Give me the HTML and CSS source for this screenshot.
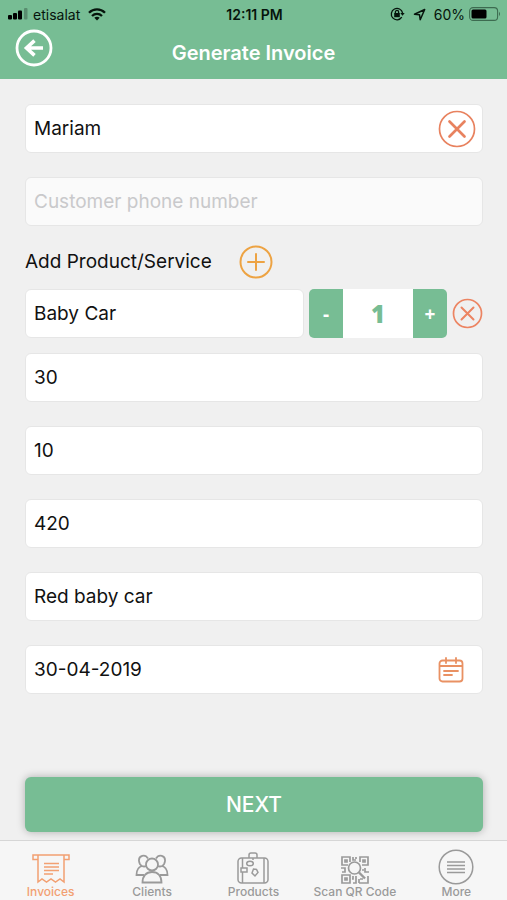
FILE: index.html
```html
<!DOCTYPE html>
<html lang="en">
<head>
<meta charset="utf-8">
<meta name="viewport" content="width=device-width, initial-scale=1">
<title>Generate Invoice</title>
<link rel="stylesheet" href="styles.css">
</head>
<body>
<header class="header">
  <div class="status">
    <div class="status-left">
      <svg width="20" height="12" viewBox="0 0 20 12"><rect x="0" y="7" width="4" height="4.500" rx="1"/><rect x="5" y="5" width="4" height="6.500" rx="1"/><rect x="10" y="2.500" width="4" height="9" rx="1"/><rect x="16" y="0" width="3.500" height="11.500" rx="1" opacity=".25"/></svg>
      <span>etisalat</span>
      <svg class="wifi" width="18" height="13" viewBox="0 0 18 13" fill="none" stroke="#06140c" stroke-width="2.300"><path d="M1 4.800C5.500 .3 12.500 .3 17 4.800M4 8c2.900-2.800 7.100-2.800 10 0"/><path d="M9 12.500 6.300 9.800q2.700-2 5.400 0Z" fill="#06140c" stroke="none"/></svg>
    </div>
    <strong class="time">12:11 PM</strong>
    <div class="status-right">
      <svg width="15" height="14" viewBox="0 0 15 14" fill="none" stroke="#06140c" stroke-width="1.300"><path d="M11.800 10.200A5.700 5.700 0 1 1 12.600 6"/><path d="M10.300 6h4.400l-2.200 2.800Z" fill="#06140c" stroke="none"/><rect x="4.200" y="6" width="5.600" height="4.200" fill="#06140c" stroke="none"/><path d="M5.400 6.500V5a1.600 1.600 0 0 1 3.200 0v1.500"/></svg>
      <svg width="13" height="13" viewBox="0 0 13 13" fill="none" stroke="#06140c" stroke-width="1.500" stroke-linejoin="round"><path d="M1.500 6.300 11.700 1.500 7.200 11.700 6.500 6.700Z"/></svg>
      <span>60%</span>
      <svg class="battery" width="32" height="14" viewBox="0 0 32 14"><rect x=".6" y=".6" width="28" height="12.800" rx="3.500" fill="none" stroke="#3d6b50" stroke-width="1.100"/><rect x="2.500" y="2.500" width="15" height="9" rx="1.500" fill="#000"/><path d="M30 4.800q2 2.200 0 4.400Z" fill="#3d6b50"/></svg>
    </div>
  </div>
  <div class="titlebar">
    <button class="icon-btn" type="button" aria-label="Back">
      <svg width="38" height="38" viewBox="0 0 38 38" fill="none" stroke="#fff"><circle cx="19" cy="19" r="17" stroke-width="2.800"/><path d="M28 19H12M19.500 11.700 11.500 19l8 7.300" stroke-width="3.600"/></svg>
    </button>
    <h1 class="title">Generate Invoice</h1>
  </div>
</header>

<main class="form">
  <div class="stack">
    <div class="field">
      <input class="input" type="text" value="Mariam" aria-label="Customer name">
      <button class="icon-btn" type="button" aria-label="Clear customer">
        <svg width="38" height="38" viewBox="0 0 38 38" fill="none" stroke="#e8825f"><circle cx="19" cy="19" r="17.500" stroke-width="1.700"/><path d="m11.500 11.500 15 15M26.500 11.500l-15 15" stroke-width="2.700" stroke-linecap="round"/></svg>
      </button>
    </div>
    <div class="field field-empty">
      <input class="input" type="tel" placeholder="Customer phone number" aria-label="Customer phone number">
    </div>
  </div>

  <div class="add-row">
    <span>Add Product/Service</span>
    <button class="icon-btn" type="button" aria-label="Add product or service">
      <svg width="34" height="34" viewBox="0 0 34 34" fill="none" stroke="#eda343"><circle cx="17" cy="17" r="15.500" stroke-width="2"/><path d="M17 9v16M9 17h16" stroke-width="2" stroke-linecap="round"/></svg>
    </button>
  </div>

  <div class="product-row">
    <div class="field product">
      <input class="input" type="text" value="Baby Car" aria-label="Product">
    </div>
    <div class="stepper">
      <button class="step" type="button" aria-label="Decrease">-</button>
      <input class="qty" type="text" inputmode="numeric" value="1" aria-label="Quantity">
      <button class="step" type="button" aria-label="Increase">+</button>
    </div>
    <button class="icon-btn" type="button" aria-label="Remove product">
      <svg width="31" height="31" viewBox="0 0 31 31" fill="none" stroke="#ec8462"><circle cx="15.500" cy="15.500" r="14" stroke-width="1.700"/><path d="m9.500 9.500 12 12M21.500 9.500l-12 12" stroke-width="2" stroke-linecap="round"/></svg>
    </button>
  </div>

  <div class="stack">
    <div class="field"><input class="input" type="text" value="30" aria-label="Price"></div>
    <div class="field"><input class="input" type="text" value="10" aria-label="Discount"></div>
    <div class="field"><input class="input" type="text" value="420" aria-label="Total"></div>
    <div class="field"><input class="input" type="text" value="Red baby car" aria-label="Description"></div>
    <div class="field">
      <input class="input" type="text" value="30-04-2019" aria-label="Date">
      <button class="icon-btn calendar" type="button" aria-label="Pick a date">
        <svg width="26" height="26" viewBox="0 0 26 26" fill="none" stroke="#e99163" stroke-width="1.800" stroke-linecap="round"><rect x="1.500" y="3.500" width="23" height="21" rx="3"/><path d="M2 9h22M8 1v5M18 1v5M6 14h14M6 18h8"/></svg>
      </button>
    </div>
  </div>

  <button class="next" type="button">NEXT</button>
</main>

<nav class="tabs">
  <a class="tab tab-active" href="#">
    <svg width="38" height="30" viewBox="0 0 38 30" fill="none" stroke="currentColor" stroke-width="1.500"><path d="M6 5.500H1V1h36v4.500h-5M6 1v27l4-3 4.500 3 4.500-3 4.500 3 4.500-3 4 3V1"/><path d="M12 9.500h15M12 13h15M12 16.500h15M12 20h9"/></svg>
    <span>Invoices</span>
  </a>
  <a class="tab" href="#">
    <svg width="34" height="30" viewBox="0 0 34 30" fill="none" stroke="currentColor" stroke-width="1.800"><path d="M13 4.500C10-.5 3.500 1.500 4 7q.3 3.500 3 5M21 4.500C24-.5 30.500 1.500 30 7q-.3 3.500-3 5"/><circle cx="17" cy="10.500" r="6"/><path d="M7.500 28.500c0-6.500 3.500-10.500 9.500-10.500s9.500 4 9.500 10.500ZM7 12c-4 1-5.500 4.500-5.500 9h7.500M27 12c4 1 5.500 4.500 5.500 9H25M7 12q2 1 4.500 0M27 12q-2 1-4.500 0"/></svg>
    <span>Clients</span>
  </a>
  <a class="tab" href="#">
    <svg width="32" height="32" viewBox="0 0 32 32" fill="none" stroke="currentColor" stroke-width="1.500"><rect x="1" y="6" width="30" height="25" rx="3.500"/><path d="M12 6V3q0-2 2-2h4q2 0 2 2v3M5.500 6v10M5.500 20v11M16 6v2M27 6v25"/><ellipse cx="13" cy="11.500" rx="3.300" ry="2.300"/><rect x="4" y="16" width="6" height="4"/><path d="m16.500 17 3 .5 1.500 3-3 3.500-3-3Z"/></svg>
    <span>Products</span>
  </a>
  <a class="tab" href="#">
    <svg width="28" height="28" viewBox="0 0 28 28" fill="none" stroke="currentColor" stroke-width="1.700"><path d="M7 9H1V1h8v5M19 6V1h8v8h-6M1 19h8v8H1Z"/><path d="M4 4h2v2H4ZM22 4h2v2h-2ZM4 22h2v2H4ZM12 1v3h3M15 1v2M0 12h4v4H1M24 12v4h4M21 14h2M12 20v3h-1M12 27h3v-7M18 27h9v-7M19 23h3M18 23v4"/><circle cx="13.500" cy="12" r="6"/><path d="m18 16.500 6 6" stroke-width="2.400"/></svg>
    <span>Scan QR Code</span>
  </a>
  <a class="tab tab-more" href="#">
    <svg width="36" height="36" viewBox="0 0 36 36" fill="none" stroke="currentColor" stroke-width="1.500"><circle cx="18" cy="18" r="16.800"/><path d="M9 13h18M9 16.500h18M9 20h18M9 23.500h18" stroke-width="1.700"/></svg>
    <span>More</span>
  </a>
</nav>
</body>
</html>
```
FILE: styles.css
```css
* {
  box-sizing: border-box;
}

body {
  margin: 0;
  min-height: 100vh;
  display: flex;
  flex-direction: column;
  background: #f0f0f0;
  color: #111;
  font-family: Inter, "Liberation Sans", sans-serif;
  font-size: 19px;
}

button,
input {
  font: inherit;
  color: inherit;
  border: 0;
  padding: 0;
  margin: 0;
}

svg {
  display: block;
  flex: none;
}

.header {
  background: #77bd94;
  padding: 4px 0 12px;
}

.status {
  display: grid;
  grid-template-columns: 1fr auto 1fr;
  align-items: center;
  height: 20px;
  padding: 0 6px 0 8px;
  color: #06140c;
  font-size: 14px;
}

.status-left,
.status-right {
  display: flex;
  align-items: center;
  gap: 5px;
}

.status-right {
  justify-content: flex-end;
  gap: 8px;
}

.wifi {
  margin-left: 3px;
}

.battery {
  margin-left: -4px;
}

.time {
  font-weight: 600;
}

.titlebar {
  display: grid;
  grid-template-columns: 38px 1fr 38px;
  align-items: start;
  height: 43px;
  padding: 5px 15px 0;
}

.title {
  margin: 0;
  padding-top: 10px;
  color: #fff;
  font-size: 20px;
  line-height: 28px;
  font-weight: 600;
  text-align: center;
}

.icon-btn {
  flex: none;
  background: none;
  cursor: pointer;
}

.form {
  flex: 1;
  display: flex;
  flex-direction: column;
  padding: 25px 24px 8px 25px;
}

.stack {
  display: flex;
  flex-direction: column;
  gap: 24px;
}

.field {
  display: flex;
  align-items: center;
  height: 49px;
  padding: 0 6px 0 8px;
  background: #fff;
  border: 1px solid #e6e6e6;
  border-radius: 6px;
}

.field-empty {
  background: #fafafa;
}

.input {
  flex: 1;
  min-width: 0;
  height: 100%;
  background: none;
  outline: 0;
}

.input::placeholder {
  color: #c9c9cb;
  opacity: 1;
}

.calendar {
  margin-right: 12px;
}

.add-row {
  display: flex;
  align-items: center;
  gap: 27px;
  height: 63px;
  padding-top: 8px;
}

.product-row {
  display: flex;
  align-items: center;
  gap: 5px;
  margin-bottom: 15px;
}

.product {
  flex: 1;
  min-width: 0;
}

.stepper {
  display: flex;
  flex: none;
  width: 138px;
  height: 49px;
  border-radius: 5px;
  overflow: hidden;
}

.step {
  flex: none;
  width: 34px;
  background: #77bd94;
  color: #fff;
  font-family: "Open Sans", sans-serif;
  font-weight: 700;
}

.qty {
  flex: 1;
  min-width: 0;
  background: #fff;
  color: #77bd94;
  font-family: "Open Sans", sans-serif;
  font-size: 24px;
  font-weight: 800;
  text-align: center;
}

.next {
  height: 55px;
  margin-top: auto;
  background: #77bd94;
  color: #fff;
  border-radius: 6px;
  box-shadow: 0 0 8px rgba(0, 0, 0, 0.28);
  font-size: 21px;
  font-weight: 500;
}

.tabs {
  display: grid;
  grid-template-columns: repeat(5, 1fr);
  height: 60px;
  background: #f6f6f6;
  border-top: 1px solid #d6d6d6;
}

.tab {
  display: flex;
  flex-direction: column;
  align-items: center;
  justify-content: flex-end;
  gap: 1px;
  padding-bottom: 1px;
  color: #9a9a9a;
  font-size: 12px;
  line-height: 14px;
  font-weight: 500;
  text-decoration: none;
  white-space: nowrap;
}

.tab-more {
  gap: 0;
}

.tab-active {
  color: #f2a072;
}
```
